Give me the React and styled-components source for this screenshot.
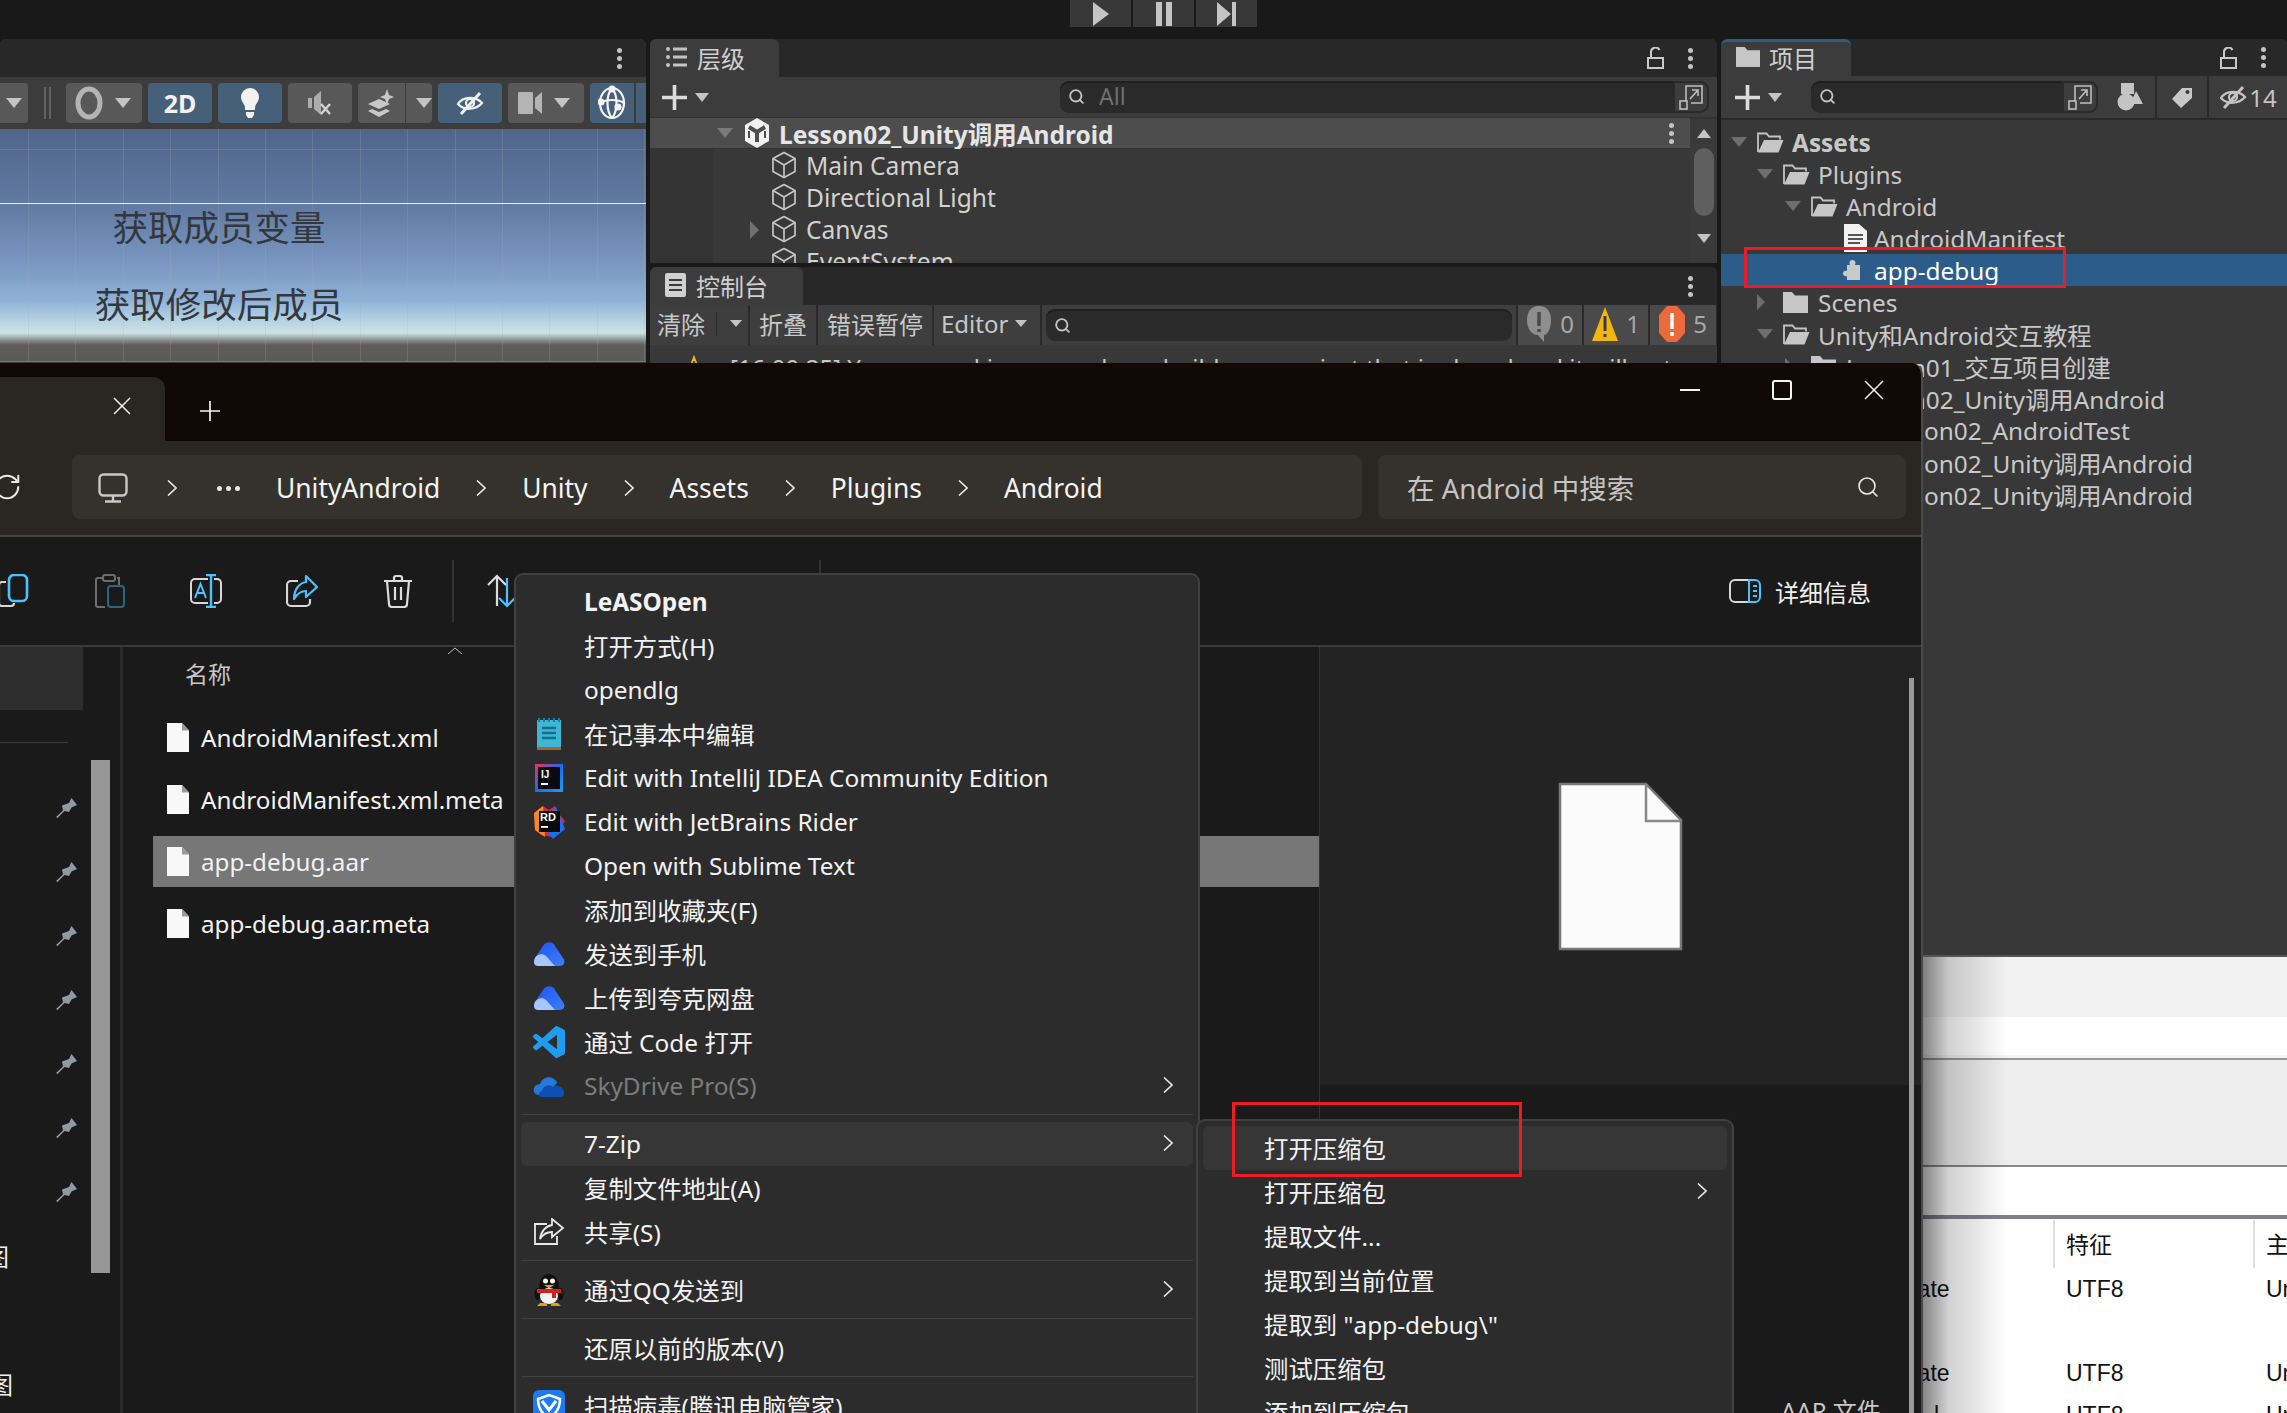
import React from 'react';
import styled, { createGlobalStyle } from 'styled-components';
import { Search, RotateCw } from 'lucide-react';

const FONT = `"Noto Sans", "Noto Sans CJK SC", sans-serif`;

const GlobalStyle = createGlobalStyle`
  html, body { margin: 0; padding: 0; background: #191919; }
  * { box-sizing: border-box; }
  svg { display: block; flex: none; }
`;

/* ---------- shared bits ---------- */

const Desktop = styled.div`
  position: relative;
  width: 2287px;
  height: 1413px;
  overflow: hidden;
  background: #191919;
  font-family: ${FONT};
  white-space: nowrap;
`;

const Arrow = styled.span`
  display: inline-block;
  flex: none;
  width: 0;
  height: 0;
  ${p => p.$dir === 'right' && `
    border-top: ${p.$size || 9}px solid transparent;
    border-bottom: ${p.$size || 9}px solid transparent;
    border-left: ${(p.$size || 9) * 1.1}px solid ${p.$color || '#707070'};
  `}
  ${p => p.$dir === 'up' && `
    border-left: ${p.$size || 7}px solid transparent;
    border-right: ${p.$size || 7}px solid transparent;
    border-bottom: ${(p.$size || 7) * 1.3}px solid ${p.$color || '#c4c4c4'};
  `}
  ${p => (!p.$dir || p.$dir === 'down') && `
    border-left: ${p.$size || 7}px solid transparent;
    border-right: ${p.$size || 7}px solid transparent;
    border-top: ${(p.$size || 7) * 1.3}px solid ${p.$color || '#c4c4c4'};
  `}
`;

const Dots = styled.span`
  display: flex;
  flex-direction: column;
  gap: 3px;
  i { width: 5px; height: 5px; border-radius: 50%; background: ${p => p.$color || '#c4c4c4'}; }
`;
const Kebab = ({ color }) => <Dots $color={color}><i /><i /><i /></Dots>;

const Chevron = ({ color = '#e8e8e8' }) => (
  <svg width="10" height="16" viewBox="0 0 10 16" fill="none" stroke={color} strokeWidth="1.600"><path d="M1 0.500 9 8 1 15.500" /></svg>
);

const PlusMark = () => (
  <svg width="25" height="25" viewBox="0 0 25 25" stroke="#dcdcdc" strokeWidth="3.600"><path d="M12.500 0V25M0 12.500H25" /></svg>
);

const Cube = () => (
  <svg width="26" height="28" viewBox="0 0 26 28" fill="none" stroke="#c6c6c6" strokeWidth="1.700" strokeLinejoin="round">
    <path d="M13 1.500 24 7.500V20.500L13 26.500 2 20.500V7.500Z" />
    <path d="M2 7.500 13 14 24 7.500M13 14V26.500" />
  </svg>
);

const UnityLogo = () => (
  <svg width="26" height="30" viewBox="0 0 26 30">
    <path d="M13 0 25 7V23L13 30 1 23V7Z" fill="#f2f2f2" />
    <path d="M13 14 5 9M13 14 21 9M13 14V24" stroke="#4d4d4d" strokeWidth="4" />
    <path d="M5 13V20M21 13V20" stroke="#4d4d4d" strokeWidth="2" />
  </svg>
);

const FolderOpen = () => (
  <svg width="27" height="21" viewBox="0 0 27 21">
    <path d="M1 20V1.500H9.500L12 4.500H23V7.500" fill="none" stroke="#c4c4c4" strokeWidth="1.800" />
    <path d="M7 8H26.500L21.500 20.500H1Z" fill="#c6c6c6" />
  </svg>
);

const FolderClosed = ({ color = '#c6c6c6', w = 25, h = 21 }) => (
  <svg width={w} height={h} viewBox="0 0 25 21"><path d="M0 0H9L12 3.500H25V21H0Z" fill={color} /></svg>
);

const NoteFile = () => (
  <svg width="24" height="28" viewBox="0 0 24 28">
    <path d="M1 0H16L24 7V28H1Z" fill="#f2f2f2" />
    <path d="M5 11H20M5 15H20M5 19H17" stroke="#555" strokeWidth="1.800" />
  </svg>
);

const PuzzleFile = () => (
  <svg width="17" height="20" viewBox="0 0 17 20">
    <path d="M4 5H7C6 3 6.500 0 9.500 0S13 3 12 5H17V20H4V16C2 17 0 15.500 0 13.500S2 10 4 11Z" fill="#c9c9c9" />
  </svg>
);

const LockOpen = () => (
  <svg width="17" height="22" viewBox="0 0 17 22" fill="none" stroke="#c8c8c8" strokeWidth="2">
    <rect x="1" y="11" width="15" height="10" />
    <path d="M4 11V5A4.500 4.500 0 0 1 12.500 3" />
  </svg>
);

const ExpandBox = () => (
  <svg width="24" height="26" viewBox="0 0 24 26" fill="none" stroke="#bdbdbd" strokeWidth="1.600">
    <path d="M7 17V2H23V19H12" />
    <rect x="1" y="17" width="7" height="8" />
    <path d="M11 15 19 6M13 6H19V12" />
  </svg>
);

const SmallSearch = ({ color = '#c4c4c4' }) => <Search size={17} color={color} strokeWidth={2.6} />;

const EyeSlash = ({ color = '#f0f0f0', w = 28, h = 24 }) => (
  <svg width={w} height={h} viewBox="0 0 28 24" fill="none" stroke={color} strokeWidth="2.200">
    <path d="M2 13C7 5 20 5 26 12 20 19 8 20 2 13Z" />
    <circle cx="14" cy="12" r="4" />
    <path d="M5 23 24 2" strokeWidth="3" />
  </svg>
);

/* ---------- unity: top bar ---------- */

const Editor = styled.div`
  display: flex;
  flex-direction: column;
  height: 955px;
`;
const PlayBar = styled.div`
  display: flex;
  gap: 2px;
  flex: none;
  height: 39px;
  padding-left: 1070px;
  align-items: flex-start;
`;
const PlayButton = styled.div`
  display: flex;
  align-items: center;
  justify-content: center;
  width: 61px;
  height: 27px;
  background: #383838;
`;
const Workspace = styled.div`
  flex: 1;
  display: flex;
  gap: 4px;
  min-height: 0;
`;
const Panel = styled.section`
  display: flex;
  flex-direction: column;
  min-height: 0;
  overflow: hidden;
  border-radius: 6px 6px 0 0;
  background: #383838;
  ${p => p.$width && `width: ${p.$width}px; flex: none;`}
  ${p => p.$height && `height: ${p.$height}px; flex: none;`}
  ${p => p.$grow && `flex: 1;`}
`;
const MiddleColumn = styled.div`
  display: flex;
  flex-direction: column;
  gap: 4px;
  width: 1067px;
  flex: none;
`;
const TabStrip = styled.div`
  display: flex;
  align-items: stretch;
  flex: none;
  height: ${p => p.$height || 38}px;
  background: #282828;
`;
const Tab = styled.div`
  display: flex;
  align-items: center;
  gap: ${p => p.$gap || 10}px;
  width: ${p => p.$width}px;
  padding: 0 0 2px 15px;
  background: #3c3c3c;
  color: #cfcfcf;
  font-size: 24px;
  border-radius: 6px 6px 0 0;
  ${p => p.$focus && `border-top: 3px solid #2c5d87; padding-bottom: 4px;`}
`;
const StripTools = styled.div`
  display: flex;
  align-items: center;
  gap: 24px;
  margin-left: auto;
  padding-right: ${p => p.$right || 24}px;
`;

const ListGlyph = () => (
  <svg width="22" height="22" viewBox="0 0 22 22" fill="#c4c4c4">
    <circle cx="3" cy="3" r="2" /><rect x="8" y="1.500" width="14" height="3" />
    <circle cx="3" cy="11" r="2" /><rect x="8" y="9.500" width="14" height="3" />
    <circle cx="3" cy="19" r="2" /><rect x="8" y="17.500" width="14" height="3" />
  </svg>
);
const ConsoleGlyph = () => (
  <svg width="21" height="24" viewBox="0 0 21 24">
    <rect width="21" height="24" rx="2" fill="#d0d0d0" />
    <path d="M4 7H17M4 12H17M4 17H17" stroke="#3c3c3c" strokeWidth="2.200" />
  </svg>
);

/* ---------- unity: scene ---------- */

const SceneToolbar = styled.div`
  display: flex;
  align-items: center;
  gap: 6px;
  flex: none;
  height: 52px;
  background: #3c3c3c;
  overflow: hidden;
`;
const ToolButton = styled.div`
  position: relative;
  display: flex;
  align-items: center;
  justify-content: ${p => p.$justify || 'center'};
  gap: ${p => p.$gap ?? 14}px;
  flex: none;
  width: ${p => p.$width || 64}px;
  height: 40px;
  padding: ${p => p.$pad || '0'};
  border-radius: ${p => p.$radius || '4px'};
  background: ${p => (p.$on ? '#46607a' : '#585858')};
  color: #f2f2f2;
  font-size: 25px;
  font-weight: 700;
`;
const Splitter = styled.i`
  align-self: stretch;
  width: 2px;
  background: #3c3c3c;
`;
const ToolbarGrip = styled.div`
  flex: none;
  width: 26px;
  height: 40px;
  display: flex;
  justify-content: center;
  gap: 3px;
  i { width: 2px; background: #626262; margin: 4px 0; }
`;
const SceneView = styled.div`
  flex: none;
  height: 233px;
  padding-top: 73px;
  display: flex;
  flex-direction: column;
  gap: 27px;
  border-bottom: 1px solid #777;
  background:
    linear-gradient(#e8eef5, #e8eef5) 0 74px / 100% 1px no-repeat,
    repeating-linear-gradient(90deg, transparent 0 28px, rgba(170, 170, 170, .22) 28px 29px, transparent 29px 47.400px),
    linear-gradient(transparent 20px, rgba(170,170,170,.22) 20px 21px, transparent 21px 162px, rgba(170,170,170,.25) 162px 163px, transparent 163px),
    linear-gradient(#51648a 0, #627ba3 78px, #7b99c3 138px, #8fb1d7 171px, #b5d2e2 191px, #cde3e4 204px, #8a9290 211px, #5f5c5a 216px, #5c5a58 233px);
`;
const SceneLabel = styled.div`
  width: 438px;
  height: 50px;
  line-height: 50px;
  text-align: center;
  font-size: 35.500px;
  color: #33373e;
`;

/* ---------- unity: hierarchy ---------- */

const PanelToolbar = styled.div`
  display: flex;
  align-items: center;
  flex: none;
  height: ${p => p.$height || 40}px;
  background: #3c3c3c;
`;
const AddButton = styled.div`
  display: flex;
  align-items: center;
  gap: 8px;
  flex: none;
  width: ${p => p.$width}px;
  padding-left: ${p => p.$left}px;
`;
const SearchField = styled.div`
  display: flex;
  align-items: center;
  gap: 14px;
  height: 32px;
  width: ${p => p.$width}px;
  padding: 0 0 2px 8px;
  border-radius: 9px;
  background: #2a2a2a;
  box-shadow: inset 0 2px 0 #1f1f1f;
  color: #6f6f6f;
  font-size: 23px;
`;
const SearchEnd = styled.div`
  margin: 0 0 -2px auto;
  align-self: stretch;
  display: flex;
  align-items: center;
  justify-content: center;
  width: 36px;
  border-radius: 0 9px 9px 0;
  background: #3d3d3d;
  border: 2px solid #2a2a2a;
`;
const TreeWrap = styled.div`
  flex: 1;
  display: flex;
  min-height: 0;
  overflow: hidden;
  background: #333;
`;
const TreeMain = styled.div`
  flex: 1;
  display: flex;
  flex-direction: column;
  min-width: 0;
`;
const SceneRow = styled.div`
  display: flex;
  align-items: center;
  flex: none;
  height: 30px;
  margin: 1px 0;
  padding: 0 16px 0 67px;
  background: #4d4d4d;
  color: #e6e6e6;
  font-size: 24.500px;
  font-weight: 700;
  gap: 11px;
  span:last-child { margin-left: auto; }
`;
const ChildRows = styled.div`
  flex: 1;
  margin-left: 63px;
  background: #383838;
`;
const GameRow = styled.div`
  display: flex;
  align-items: center;
  height: 32px;
  padding-left: 37px;
  color: #d2d2d2;
  font-size: 24.600px;
  > span:first-child { width: 21px; flex: none; }
  > svg { margin-right: 9px; }
`;
const ScrollColumn = styled.div`
  width: 27px;
  flex: none;
  display: flex;
  flex-direction: column;
  align-items: center;
  background: #3a3a3a;
  margin-top: 2px;
`;
const ScrollThumb = styled.div`
  width: 20px;
  height: 68px;
  margin: 10px 0 18px;
  border-radius: 10px;
  background: #5f5f5f;
`;

/* ---------- unity: console ---------- */

const ConsoleBar = styled.div`
  display: flex;
  align-items: stretch;
  flex: none;
  gap: 2px;
  height: 40px;
  background: #2a2a2a;
`;
const ConsoleButton = styled.div`
  display: flex;
  align-items: center;
  justify-content: ${p => p.$justify || 'center'};
  gap: ${p => p.$gap || 8}px;
  width: ${p => p.$width}px;
  flex: none;
  padding: 0 0 3px ${p => p.$left || 0}px;
  background: ${p => p.$light ? '#4a4a4a' : '#3e3e3e'};
  color: ${p => p.$light ? '#a8a8a8' : '#c8c8c8'};
  font-size: 24px;
`;
const ConsoleSearch = styled.div`
  display: flex;
  align-items: center;
  flex: none;
  width: 474px;
  padding: 0 4px;
  background: #3e3e3e;
`;
const ConsoleField = styled.div`
  display: flex;
  align-items: center;
  width: 100%;
  height: 32px;
  padding-left: 8px;
  border-radius: 9px;
  background: #2a2a2a;
  box-shadow: inset 0 2px 0 #1f1f1f;
`;
const LogRow = styled.div`
  display: flex;
  align-items: center;
  gap: 26px;
  height: 34px;
  margin-top: 5px;
  padding-left: 34px;
  color: #c8c8c8;
  font-size: 24px;
`;

const WarnBubble = () => (
  <svg width="26" height="38" viewBox="0 0 26 38">
    <path d="M13 1C21 1 25 7 25 15S22 30 18 30V37L12 30C5 30 1 23 1 15S5 1 13 1Z" fill="#8e8e8e" />
    <path d="M13 7V21M13 24V27" stroke="#4a4a4a" strokeWidth="3.500" />
  </svg>
);
const WarnTriangle = ({ w = 26, h = 36 }) => (
  <svg width={w} height={h} viewBox="0 0 26 36">
    <path d="M13 1 26 35H0Z" fill="#f2b70f" />
    <path d="M13 10V25M13 28V31" stroke="#3a3a3a" strokeWidth="3" />
  </svg>
);
const ErrorHex = () => (
  <svg width="26" height="36" viewBox="0 0 26 36">
    <path d="M8 0H18L26 9V27L18 36H8L0 27V9Z" fill="#ea6a3c" />
    <path d="M13 7V23M13 26V30" stroke="#fff" strokeWidth="3.500" />
  </svg>
);

/* ---------- unity: project ---------- */

const ProjectTools = styled.div`
  display: flex;
  align-self: stretch;
  margin-left: 7px;
  gap: 2px;
  background: #2a2a2a;
`;
const ProjectTool = styled.div`
  display: flex;
  align-items: center;
  justify-content: center;
  gap: 2px;
  width: ${p => p.$width}px;
  background: #3c3c3c;
  color: #c4c4c4;
  font-size: 24px;
`;
const ProjectTree = styled.div`
  flex: 1;
  padding-top: 6px;
  background: #383838;
  border-top: 2px solid #2a2a2a;
`;
const AssetRow = styled.div`
  display: flex;
  align-items: center;
  height: 32px;
  padding-left: ${p => (p.$depth === 0 ? 10 : 8 + p.$depth * 28)}px;
  color: ${p => (p.$selected ? '#fff' : '#c8c8c8')};
  background: ${p => (p.$selected ? '#2c5d8a' : 'transparent')};
  font-size: 24.400px;
  font-weight: ${p => (p.$bold ? 700 : 400)};
`;
const ArrowSlot = styled.span`
  display: flex;
  flex: none;
  width: 26px;
`;
const IconSlot = styled.span`
  display: flex;
  flex: none;
  width: 35px;
  padding-left: ${p => p.$left || 0}px;
`;

const ASSETS = [
  { name: 'Assets', depth: 0, open: true, bold: true },
  { name: 'Plugins', depth: 1, open: true },
  { name: 'Android', depth: 2, open: true },
  { name: 'AndroidManifest', depth: 3, file: 'note' },
  { name: 'app-debug', depth: 3, file: 'puzzle', selected: true },
  { name: 'Scenes', depth: 1 },
  { name: 'Unity和Android交互教程', depth: 1, open: true },
  { name: 'Lesson01_交互项目创建', depth: 2 },
  { name: 'Lesson02_Unity调用Android', depth: 2, open: true },
  { name: 'Lesson02_AndroidTest', depth: 3 },
  { name: 'Lesson02_Unity调用Android', depth: 3 },
  { name: 'Lesson02_Unity调用Android', depth: 3 },
];

/* ---------- file explorer window ---------- */

const Explorer = styled.div`
  position: absolute;
  left: 0;
  top: 363px;
  width: 1923px;
  height: 1050px;
  display: flex;
  flex-direction: column;
  overflow: hidden;
  border-right: 2px solid #4a4a4a;
  border-top-right-radius: 12px;
  background: #1a1a1a;
`;
const TitleBar = styled.div`
  display: flex;
  flex: none;
  height: 78px;
  background: #100905;
`;
const WindowTab = styled.div`
  display: flex;
  align-items: center;
  justify-content: flex-end;
  width: 165px;
  margin-top: 14px;
  padding: 0 34px 6px 0;
  border-radius: 0 12px 0 0;
  background: #2a2723;
`;
const NewTab = styled.div`
  display: flex;
  align-items: center;
  margin-left: 35px;
  padding-top: 18px;
`;
const WindowButtons = styled.div`
  display: flex;
  align-items: center;
  gap: 72px;
  height: 54px;
  margin-left: auto;
  padding-right: 37px;
`;
const NavBar = styled.div`
  display: flex;
  align-items: center;
  gap: 16px;
  flex: none;
  height: 96px;
  padding: 0 15px 2px 0;
  background: #2a2722;
  border-bottom: 2px solid #444;
`;
const Refresh = styled.div`
  flex: none;
  width: 56px;
  margin-left: -8px;
  margin-right: 8px;
`;
const AddressBar = styled.div`
  display: flex;
  align-items: center;
  gap: 36px;
  flex: none;
  width: 1290px;
  height: 64px;
  padding: 2px 0 0 26px;
  border-radius: 8px;
  background: #35322d;
  color: #f4f4f4;
  font-size: 26.400px;
`;
const EllipsisDots = styled.span`
  display: flex;
  gap: 4px;
  margin-left: 4px;
  i { width: 5px; height: 5px; border-radius: 50%; background: #e8e8e8; }
`;
const SearchBox = styled.div`
  display: flex;
  align-items: center;
  justify-content: space-between;
  flex: 1;
  height: 64px;
  padding: 0 26px 0 29px;
  border-radius: 8px;
  background: #35322d;
  color: #c4c4c4;
  font-size: 27.500px;
`;
const CommandBar = styled.div`
  display: flex;
  align-items: center;
  flex: none;
  height: 110px;
  margin-left: -34px;
  border-bottom: 2px solid #3a3a3a;
`;
const CommandItem = styled.div`
  display: flex;
  align-items: center;
  justify-content: center;
  flex: none;
  width: 96px;
`;
const CommandSep = styled.i`
  flex: none;
  width: 2px;
  height: 62px;
  margin-left: ${p => p.$left || 0}px;
  background: #333;
`;
const DetailsButton = styled.div`
  display: flex;
  align-items: center;
  gap: 14px;
  margin-left: auto;
  padding-right: 50px;
  color: #f0f0f0;
  font-size: 24px;
`;
const Body = styled.div`
  flex: 1;
  display: flex;
  min-height: 0;
`;
const Sidebar = styled.div`
  display: flex;
  flex: none;
  width: 120px;
`;
const SideNav = styled.div`
  flex: none;
  width: 91px;
`;
const SideSelected = styled.div`
  width: 83px;
  height: 63px;
  background: #2d2d2d;
`;
const SideRule = styled.div`
  width: 68px;
  height: 1px;
  margin: 32px 0 32px;
  background: #3c3c3c;
`;
const SideRow = styled.div`
  display: flex;
  align-items: center;
  justify-content: flex-end;
  width: 77px;
  height: 64px;
  color: #f0f0f0;
  font-size: 24px;
`;
const ClippedLabel = styled.span`
  margin-right: auto;
  margin-left: -${p => p.$shift}px;
`;
const SideScroll = styled.div`
  flex: none;
  width: 19px;
  height: 513px;
  margin-top: 113px;
  background: #969696;
`;
const PaneRule = styled.div`
  flex: none;
  width: 3px;
  background: #2a2a2a;
`;
const FileList = styled.div`
  flex: none;
  width: 1196px;
  padding-left: 30px;
`;
const ListHeader = styled.div`
  position: relative;
  height: 65px;
  padding: 12px 0 0 32px;
  color: #c8c8c8;
  font-size: 23px;
  line-height: 30px;
`;
const SortCaret = styled.svg`
  position: absolute;
  left: 295px;
  top: 0;
`;
const FileRow = styled.div`
  display: flex;
  align-items: center;
  gap: 12px;
  height: 51px;
  margin-bottom: 11px;
  padding-left: 14px;
  background: ${p => (p.$selected ? '#777' : 'transparent')};
  color: #f2f2f2;
  font-size: 24.200px;
`;
const Preview = styled.div`
  position: relative;
  flex: 1;
  display: flex;
  flex-direction: column;
  border-left: 1px solid #333;
`;
const PreviewTop = styled.div`
  display: flex;
  align-items: center;
  justify-content: center;
  flex: none;
  height: 438px;
  background: #232323;
`;
const PreviewBottom = styled.div`
  flex: 1;
  padding: 307px 0 0 461px;
  color: #c8c8c8;
  font-size: 24px;
`;
const PreviewScroll = styled.div`
  position: absolute;
  right: 7px;
  top: 31px;
  bottom: 0;
  width: 5px;
  background: #999;
`;

const MonitorIcon = () => (
  <svg width="33" height="30" viewBox="0 0 33 30" fill="none" stroke="#c8c8c8" strokeWidth="2.400">
    <rect x="1.500" y="1.500" width="27" height="21" rx="4" />
    <path d="M15 23V28M7 28.500H23" />
  </svg>
);
const CopyIcon = () => (
  <svg width="32" height="34" viewBox="0 0 32 34" fill="none" strokeWidth="2.200" strokeLinejoin="round">
    <path d="M8 8H4A3 3 0 0 0 1 11V29A3 3 0 0 0 4 32H13A3 3 0 0 0 16 29" stroke="#d8d8d8" />
    <rect x="11" y="1" width="18" height="26" rx="5" stroke="#4cc2ff" strokeWidth="2.600" />
  </svg>
);
const PasteIcon = () => (
  <svg width="30" height="34" viewBox="0 0 30 34" fill="none" strokeWidth="2">
    <path d="M8 4H3A2 2 0 0 0 1 6V31A2 2 0 0 0 3 33H10M22 4H24V11" stroke="#6d6d6d" />
    <rect x="8" y="1" width="12" height="6" rx="2" stroke="#6d6d6d" />
    <rect x="13" y="12" width="16" height="21" rx="3" stroke="#2b6585" />
  </svg>
);
const RenameIcon = () => (
  <svg width="34" height="34" viewBox="0 0 34 34" fill="none" strokeWidth="2">
    <path d="M19 5H6A4 4 0 0 0 2 9V25A4 4 0 0 0 6 29H19M25 5H28A4 4 0 0 1 32 9V25A4 4 0 0 1 28 29H25" stroke="#d8d8d8" />
    <path d="M22 1V33M17 1H27M17 33H27" stroke="#4cc2ff" strokeWidth="2.400" />
    <path d="M6 24 11.500 10 17 24M8 19H15" stroke="#4cc2ff" />
  </svg>
);
const ShareIcon = () => (
  <svg width="32" height="34" viewBox="0 0 32 34" fill="none" strokeWidth="2.200" strokeLinejoin="round">
    <path d="M12 7H5A4 4 0 0 0 1 11V28A4 4 0 0 0 5 32H20A4 4 0 0 0 24 28V25" stroke="#d8d8d8" />
    <path d="M20 2 31 13 20 23V17C15 17 11 20 8 25 8 16 13 9 20 8Z" stroke="#4cc2ff" />
  </svg>
);
const TrashIcon = () => (
  <svg width="30" height="34" viewBox="0 0 30 34" fill="none" stroke="#dcdcdc" strokeWidth="2.200">
    <path d="M1 7H29M11 7V4A2 2 0 0 1 13 2H17A2 2 0 0 1 19 4V7" />
    <path d="M4 7 6 30A3 3 0 0 0 9 33H21A3 3 0 0 0 24 30L26 7" />
    <path d="M12 13V26M18 13V26" />
  </svg>
);
const SortIcon = () => (
  <svg width="30" height="34" viewBox="0 0 30 34" fill="none" strokeWidth="2.200">
    <path d="M10 32V2M1 11 10 2 19 11" stroke="#dcdcdc" />
    <path d="M20 4V32M12 24 20 32 28 24" stroke="#4cc2ff" />
  </svg>
);
const DetailsIcon = () => (
  <svg width="32" height="24" viewBox="0 0 32 24" fill="none" strokeWidth="2">
    <path d="M20 1H6A5 5 0 0 0 1 6V18A5 5 0 0 0 6 23H20" stroke="#d8d8d8" />
    <path d="M20 1H26A5 5 0 0 1 31 6V18A5 5 0 0 1 26 23H20Z" stroke="#4cc2ff" />
    <path d="M24 7H28M24 12H28M24 17H28" stroke="#4cc2ff" />
  </svg>
);
const PinIcon = () => (
  <svg width="21" height="21" viewBox="0 0 21 21">
    <path d="M0 20 7 13.500 6 8.500 13 6 15.500 1 21 8 15.500 10.500 13 15 8.500 14 1.500 21Z" fill="#8f9aa3" />
  </svg>
);
const SmallPage = () => (
  <svg width="22" height="29" viewBox="0 0 22 29">
    <path d="M0 0H15L22 7.500V29H0Z" fill="#f8f8f8" />
    <path d="M15 0V7.500H22" fill="#9a9a9a" />
  </svg>
);
const BigPage = () => (
  <svg width="125" height="169" viewBox="0 0 125 169">
    <path d="M2 2H88L123 38V167H2Z" fill="#fbfbfb" stroke="#777" strokeWidth="2.500" />
    <path d="M88 2V39H123" fill="none" stroke="#888" strokeWidth="2.500" />
  </svg>
);

/* ---------- context menus ---------- */

const Menu = styled.div`
  position: absolute;
  left: ${p => p.$left}px;
  top: ${p => p.$top}px;
  width: ${p => p.$width}px;
  padding: ${p => p.$pad}px 5px;
  border: 2px solid #404040;
  border-radius: 9px;
  background: #2c2c2c;
`;
const MenuRow = styled.div`
  display: flex;
  align-items: center;
  height: 44px;
  padding: 0 20px 2px ${p => p.$indent || 63}px;
  position: relative;
  border-radius: 6px;
  background: ${p => (p.$active ? '#363636' : 'transparent')};
  color: ${p => (p.$disabled ? '#7c7c7c' : '#f2f2f2')};
  font-size: 24.400px;
  font-weight: ${p => (p.$bold ? 700 : 400)};
`;
const MenuIcon = styled.span`
  position: absolute;
  left: 12px;
  top: 6px;
  width: 32px;
  height: 32px;
  display: flex;
  align-items: center;
  justify-content: center;
`;
const MenuChevron = styled.span`
  margin-left: auto;
`;
const MenuSep = styled.div`
  height: 14px;
  padding-top: 6px;
  &::after { content: ''; display: block; height: 1px; background: #414141; }
`;

const NotepadLogo = () => (
  <svg width="24" height="32" viewBox="0 0 24 32">
    <rect y="2" width="24" height="28" fill="#3eb6d6" />
    <rect y="29" width="24" height="3" fill="#a9622a" />
    <path d="M2 0V4M7 0V4M12 0V4M17 0V4M22 0V4" stroke="#1a7f99" strokeWidth="2" />
    <path d="M5 10H19M5 15H19M5 20H19" stroke="#146f88" strokeWidth="2.500" />
  </svg>
);
const IdeaLogo = () => (
  <svg width="28" height="28" viewBox="0 0 28 28">
    <defs>
      <linearGradient id="ij" x1="0" y1="0" x2="1" y2="1">
        <stop offset="0" stopColor="#fe2857" /><stop offset=".5" stopColor="#1b6cf4" /><stop offset="1" stopColor="#1b9cf4" />
      </linearGradient>
    </defs>
    <rect width="28" height="28" fill="url(#ij)" />
    <rect x="3" y="3" width="22" height="22" fill="#0a0a12" />
    <text x="6" y="14" fontSize="10" fontWeight="700" fill="#fff" fontFamily="Liberation Sans, sans-serif">IJ</text>
    <rect x="6" y="19" width="7" height="2" fill="#fff" />
  </svg>
);
const RiderLogo = () => (
  <svg width="32" height="34" viewBox="0 0 32 34">
    <path d="M1 8 10 1 16 5 22 1 26 9 32 16 27 24 20 32 8 30 2 25Z" fill="#d7264c" />
    <path d="M1 8 10 1 12 32 2 25Z" fill="#f58b1f" />
    <path d="M22 1 26 9 32 24 20 34 14 26Z" fill="#1d6ff0" />
    <rect x="6" y="6" width="21" height="21" fill="#0a0a0a" />
    <text x="7" y="16" fontSize="11" fontWeight="700" fill="#fff" fontFamily="Liberation Sans, sans-serif">RD</text>
    <rect x="8" y="21" width="7" height="1.800" fill="#fff" />
  </svg>
);
const QuarkCloud = () => (
  <svg width="32" height="24" viewBox="0 0 32 24">
    <defs>
      <linearGradient id="qk" x1="0" y1="0" x2="1" y2="1">
        <stop offset="0" stopColor="#1f55ee" /><stop offset="1" stopColor="#3d7dfc" />
      </linearGradient>
    </defs>
    <path d="M5 24C1 24 0 20 2 16L10 4C13 -1 20 -1 22 4L30 16C33 20 31 24 27 24Z" fill="url(#qk)" />
    <path d="M5 24C1 24 0 20 2 16 4 12 10 11 13 14L22 24Z" fill="#a9c6ff" />
  </svg>
);
const CodeLogo = () => (
  <svg width="32" height="32" viewBox="0 0 24 24">
    <path fill="#1f9cf0" d="M23.150 2.587 18.210.21a1.494 1.494 0 0 0-1.705.29l-9.460 8.630-4.120-3.128a.999.999 0 0 0-1.276.057L.327 7.261A1 1 0 0 0 .326 8.740L3.899 12 .326 15.260a1 1 0 0 0 .001 1.479L1.650 17.940a.999.999 0 0 0 1.276.057l4.120-3.128 9.460 8.630a1.492 1.492 0 0 0 1.704.29l4.942-2.377A1.500 1.500 0 0 0 24 20.060V3.939a1.500 1.500 0 0 0-.850-1.352zm-5.146 14.861L10.826 12l7.178-5.448v10.896z" />
  </svg>
);
const DriveCloud = () => (
  <svg width="32" height="22" viewBox="0 0 32 22">
    <path d="M6 20C2 20 0 17 1 13 2 10 5 9 7 9 9 3 16 0 21 4 23 5 24 7 24 8L12 20Z" fill="#2a78d5" />
    <path d="M9 22C5 22 5 17 9 16 10 11 16 9 20 12 24 9 31 12 31 17 32 20 30 22 27 22Z" fill="#0f4fb4" />
  </svg>
);
const ShareMenuIcon = () => (
  <svg width="32" height="28" viewBox="0 0 32 28" fill="none" stroke="#e8e8e8" strokeWidth="1.800">
    <path d="M14 6H2V26H24V18" />
    <path d="M19 1 30 10 19 19V14C14 14 10 16 7 21 8 13 13 8 19 7Z" />
  </svg>
);
const PenguinLogo = () => (
  <svg width="30" height="32" viewBox="0 0 30 32">
    <ellipse cx="15" cy="13" rx="10" ry="13" fill="#111" />
    <ellipse cx="3.500" cy="20" rx="3" ry="6" fill="#111" />
    <ellipse cx="26.500" cy="20" rx="3" ry="6" fill="#111" />
    <ellipse cx="15" cy="22" rx="9" ry="8" fill="#f4f4f4" />
    <circle cx="11.500" cy="7" r="2.500" fill="#f4f4f4" /><circle cx="18.500" cy="7" r="2.500" fill="#f4f4f4" />
    <path d="M10 11H20L15 14.500Z" fill="#e8a010" />
    <path d="M3 15H27V19H22V24H18V19H3Z" fill="#d81e1e" />
    <path d="M6 29H13V32H3ZM17 29H24L27 32H17Z" fill="#e8a010" />
  </svg>
);
const GuardLogo = () => (
  <svg width="32" height="32" viewBox="0 0 32 32">
    <rect width="32" height="32" rx="6" fill="#1c7bf2" />
    <path d="M5 9 16 5 27 9C27 18 23 24 16 28 9 24 5 18 5 9Z" fill="none" stroke="#fff" strokeWidth="2.500" />
    <path d="M9 11 16 20 23 11" fill="none" stroke="#fff" strokeWidth="3" />
  </svg>
);

const MAIN_MENU = [
  { text: 'LeASOpen', bold: true },
  { text: '打开方式(H)' },
  { text: 'opendlg' },
  { text: '在记事本中编辑', icon: <NotepadLogo /> },
  { text: 'Edit with IntelliJ IDEA Community Edition', icon: <IdeaLogo /> },
  { text: 'Edit with JetBrains Rider', icon: <RiderLogo /> },
  { text: 'Open with Sublime Text' },
  { text: '添加到收藏夹(F)' },
  { text: '发送到手机', icon: <QuarkCloud /> },
  { text: '上传到夸克网盘', icon: <QuarkCloud /> },
  { text: '通过 Code 打开', icon: <CodeLogo /> },
  { text: 'SkyDrive Pro(S)', icon: <DriveCloud />, more: true, disabled: true },
  { sep: true },
  { text: '7-Zip', more: true, active: true },
  { text: '复制文件地址(A)' },
  { text: '共享(S)', icon: <ShareMenuIcon /> },
  { sep: true },
  { text: '通过QQ发送到', icon: <PenguinLogo />, more: true },
  { sep: true },
  { text: '还原以前的版本(V)' },
  { sep: true },
  { text: '扫描病毒(腾讯电脑管家)', icon: <GuardLogo /> },
];

const SUB_MENU = [
  { text: '打开压缩包', active: true },
  { text: '打开压缩包', more: true },
  { text: '提取文件...' },
  { text: '提取到当前位置' },
  { text: '提取到 "app-debug\\"' },
  { text: '测试压缩包' },
  { text: '添加到压缩包' },
];

const MenuItems = ({ items, indent }) => items.map((item, i) =>
  item.sep ? <MenuSep key={i} /> : (
    <MenuRow key={i} $indent={indent} $active={item.active} $bold={item.bold} $disabled={item.disabled}>
      {item.icon && <MenuIcon>{item.icon}</MenuIcon>}
      {item.text}
      {item.more && <MenuChevron><Chevron /></MenuChevron>}
    </MenuRow>
  ));

const RedBox = styled.div`
  position: absolute;
  left: ${p => p.$left}px;
  top: ${p => p.$top}px;
  width: ${p => p.$width}px;
  height: ${p => p.$height}px;
  border: 3px solid #ed1c24;
`;

/* ---------- window behind explorer ---------- */

const BackWindow = styled.div`
  position: absolute;
  left: 1923px;
  right: 0;
  top: 955px;
  bottom: 0;
  display: flex;
  flex-direction: column;
  overflow: hidden;
  background: #fff;
  border-top: 2px solid #555;
  &::before {
    content: '';
    position: absolute;
    inset: 0 auto 0 0;
    width: 85px;
    background: linear-gradient(90deg, rgba(0,0,0,.48), rgba(0,0,0,.18) 30%, rgba(0,0,0,0));
  }
`;
const Band = styled.div`
  flex: none;
  height: ${p => p.$height}px;
  background: ${p => p.$color};
`;
const Columns = styled.div`
  display: grid;
  grid-template-columns: 132px 200px 1fr;
  grid-auto-rows: 42px;
  color: #111;
  font-family: "Liberation Sans", "Noto Sans CJK SC", sans-serif;
  font-size: 23px;
`;
const HeadCell = styled.div`
  display: flex;
  align-items: center;
  height: 48px;
  padding: 0 0 2px 11px;
  border-left: ${p => (p.$first ? '0' : '2px solid #e0e0e0')};
`;
const HeadRow = styled.div`
  display: grid;
  grid-template-columns: 130px 200px 1fr;
  flex: none;
  font-family: "Liberation Sans", "Noto Sans CJK SC", sans-serif;
  font-size: 23px;
  color: #111;
  margin-top: 1px;
`;
const Cell = styled.div`
  display: flex;
  align-items: center;
  padding-left: 11px;
  overflow: hidden;
`;
const CutCell = styled.div`
  display: flex;
  align-items: center;
  margin-left: -${p => p.$shift}px;
`;

export default function App() {
  return (
    <Desktop>
      <GlobalStyle />

      <Editor>
        <PlayBar>
          <PlayButton><svg width="16" height="24"><path d="M0 0 16 12 0 24Z" fill="#c4c4c4" /></svg></PlayButton>
          <PlayButton><svg width="18" height="24"><path d="M1 0H7V24H1ZM11 0H17V24H11Z" fill="#c4c4c4" /></svg></PlayButton>
          <PlayButton><svg width="20" height="24"><path d="M0 0 14 12 0 24ZM15 0H19V24H15Z" fill="#c4c4c4" /></svg></PlayButton>
        </PlayBar>

        <Workspace>
          <Panel $width={646}>
            <TabStrip>
              <StripTools><Kebab /></StripTools>
            </TabStrip>
            <SceneToolbar>
              <ToolButton $width={28} $radius="0 4px 4px 0"><Arrow $size={8} /></ToolButton>
              <ToolbarGrip><i /><i /></ToolbarGrip>
              <ToolButton $width={76} $justify="flex-start" $pad="0 0 0 9px" $gap={12}>
                <svg width="28" height="34" viewBox="0 0 28 34" fill="none"><ellipse cx="14" cy="17" rx="11" ry="14" stroke="#b4b4b4" strokeWidth="5" /></svg>
                <Arrow $size={8} />
              </ToolButton>
              <ToolButton $on>2D</ToolButton>
              <ToolButton $on>
                <svg width="18" height="30" viewBox="0 0 18 30"><path d="M9 0A9 9 0 0 1 18 9C18 14 14 16 14 20V22H4V20C4 16 0 14 0 9A9 9 0 0 1 9 0ZM5 24H13V27L11 30H7L5 27Z" fill="#f2f2f2" /></svg>
              </ToolButton>
              <ToolButton>
                <svg width="24" height="26" viewBox="0 0 24 26" fill="#adadad"><path d="M0 8H4V18H0ZM6 7 13 1V25L6 19Z" /><path d="M13 14 22 24M22 14 13 24" stroke="#d2d2d2" strokeWidth="2.500" /></svg>
              </ToolButton>
              <ToolButton $width={74} $justify="flex-start" $pad="0 0 0 9px" $gap={10}>
                <svg width="28" height="30" viewBox="0 0 28 30" fill="#c8c8c8"><path d="M1 16 12 11 23 16 12 21ZM1 23 5 21 12 24 19 21 23 23 12 29Z" /><path d="M20 1 22 7 27 9 22 11 20 17 18 11 13 9 18 7Z" /></svg>
                <Splitter />
                <Arrow $size={8} />
              </ToolButton>
              <ToolButton $on><EyeSlash /></ToolButton>
              <ToolButton $width={76} $justify="flex-start" $pad="0 0 0 10px" $gap={12}>
                <svg width="24" height="22" viewBox="0 0 24 22" fill="#b4b4b4"><rect width="15" height="22" rx="1" /><path d="M17 6 24 0V22L17 16Z" /></svg>
                <Arrow $size={8} />
              </ToolButton>
              <ToolButton $on $width={70} $justify="flex-start" $pad="0 0 0 8px" $radius="4px 0 0 4px" $gap={8}>
                <svg width="28" height="36" viewBox="0 0 28 36" fill="none" stroke="#f4f4f4" strokeWidth="2.200">
                  <ellipse cx="14" cy="18" rx="12" ry="15" />
                  <path d="M2 18C8 14 20 14 26 18M14 3C8 10 8 26 14 33M14 3C20 10 20 26 14 33" />
                  <circle cx="14" cy="4" r="2.500" fill="#f4f4f4" /><circle cx="3" cy="17" r="2.500" fill="#f4f4f4" /><circle cx="20" cy="22" r="2.500" fill="#f4f4f4" />
                </svg>
                <Splitter />
              </ToolButton>
            </SceneToolbar>
            <SceneView>
              <SceneLabel>获取成员变量</SceneLabel>
              <SceneLabel>获取修改后成员</SceneLabel>
            </SceneView>
          </Panel>

          <MiddleColumn>
            <Panel $height={224}>
              <TabStrip>
                <Tab $width={129}><ListGlyph />层级</Tab>
                <StripTools><LockOpen /><Kebab /></StripTools>
              </TabStrip>
              <PanelToolbar>
                <AddButton $width={410} $left={12}><PlusMark /><Arrow $size={7} /></AddButton>
                <SearchField $width={649}>
                  <SmallSearch />All
                  <SearchEnd><ExpandBox /></SearchEnd>
                </SearchField>
              </PanelToolbar>
              <TreeWrap>
                <TreeMain>
                  <SceneRow>
                    <Arrow $size={8} $color="#7a7a7a" />
                    <UnityLogo />
                    <span style={{ marginLeft: -2 }}>Lesson02_Unity调用Android</span>
                    <Kebab />
                  </SceneRow>
                  <ChildRows>
                    <GameRow><span /><Cube />Main Camera</GameRow>
                    <GameRow><span /><Cube />Directional Light</GameRow>
                    <GameRow><span><Arrow $dir="right" $size={9} /></span><Cube />Canvas</GameRow>
                    <GameRow><span /><Cube />EventSystem</GameRow>
                  </ChildRows>
                </TreeMain>
                <ScrollColumn>
                  <Arrow $dir="up" $size={7} style={{ marginTop: 10 }} />
                  <ScrollThumb />
                  <Arrow $size={7} />
                </ScrollColumn>
              </TreeWrap>
            </Panel>

            <Panel $grow>
              <TabStrip>
                <Tab $width={153}><ConsoleGlyph />控制台</Tab>
                <StripTools><Kebab /></StripTools>
              </TabStrip>
              <ConsoleBar>
                <ConsoleButton $width={98} $justify="flex-start" $left={7} $gap={11}>
                  清除<Splitter style={{ height: 24, alignSelf: 'center', width: 1, background: '#2a2a2a' }} /><Arrow $size={6} style={{ marginLeft: 2 }} />
                </ConsoleButton>
                <ConsoleButton $width={66}>折叠</ConsoleButton>
                <ConsoleButton $width={114}>错误暂停</ConsoleButton>
                <ConsoleButton $width={106} $justify="flex-start" $left={7} $gap={7}>Editor<Arrow $size={6} /></ConsoleButton>
                <ConsoleSearch><ConsoleField><SmallSearch /></ConsoleField></ConsoleSearch>
                <ConsoleButton $width={64} $light><WarnBubble />0</ConsoleButton>
                <ConsoleButton $width={64} $light><WarnTriangle />1</ConsoleButton>
                <ConsoleButton $width={66} $light><ErrorHex />5</ConsoleButton>
              </ConsoleBar>
              <LogRow><WarnTriangle w={20} h={26} />[16:00:25] You are making your player build on a project that is closed and it will not run as expected</LogRow>
            </Panel>
          </MiddleColumn>

          <Panel $grow>
            <TabStrip $height={37}>
              <Tab $width={130} $focus $gap={9}><FolderClosed w={24} h={22} />项目</Tab>
              <StripTools $right={21}><LockOpen /><Kebab /></StripTools>
            </TabStrip>
            <PanelToolbar $height={42}>
              <AddButton $width={90} $left={14}><PlusMark /><Arrow $size={7} /></AddButton>
              <SearchField $width={287}>
                <SmallSearch />
                <SearchEnd><ExpandBox /></SearchEnd>
              </SearchField>
              <ProjectTools>
                <ProjectTool $width={50}>
                  <svg width="26" height="28" viewBox="0 0 26 28" fill="#c4c4c4"><rect x="4" width="13" height="11" /><circle cx="9" cy="19" r="8.500" /><path d="M19 8 26 21H13Z" /></svg>
                </ProjectTool>
                <ProjectTool $width={50}>
                  <svg width="22" height="22" viewBox="0 0 22 22"><path d="M11 2 H21 V12 L10 22 1 13Z" fill="#c8c8c8" /><circle cx="16.500" cy="6" r="2" fill="#3c3c3c" /></svg>
                </ProjectTool>
                <ProjectTool $width={78}><EyeSlash color="#c4c4c4" w={28} h={24} />14</ProjectTool>
              </ProjectTools>
            </PanelToolbar>
            <ProjectTree>
              {ASSETS.map((a, i) => (
                <AssetRow key={i} $depth={a.depth} $selected={a.selected} $bold={a.bold}>
                  <ArrowSlot>
                    {!a.file && <Arrow $dir={a.open ? 'down' : 'right'} $size={8} $color="#6e6e6e" />}
                  </ArrowSlot>
                  <IconSlot $left={a.file ? 4 : 0}>
                    {a.file === 'note' && <NoteFile />}
                    {a.file === 'puzzle' && <PuzzleFile />}
                    {!a.file && (a.open ? <FolderOpen /> : <FolderClosed />)}
                  </IconSlot>
                  {a.name}
                </AssetRow>
              ))}
            </ProjectTree>
          </Panel>
        </Workspace>
      </Editor>

      <RedBox $left={1744} $top={247} $width={322} $height={41} />

      <BackWindow>
        <Band $height={60} $color="#f2f2f2" />
        <Band $height={38} $color="#fff" />
        <Band $height={3} $color="#f4f4f4" />
        <Band $height={2} $color="#999" />
        <Band $height={105} $color="#eee" />
        <Band $height={2} $color="#888" />
        <Band $height={48} $color="#fff" />
        <Band $height={4} $color="#80808a" />
        <HeadRow>
          <HeadCell $first />
          <HeadCell>特征</HeadCell>
          <HeadCell>主</HeadCell>
        </HeadRow>
        <Columns>
          <CutCell $shift={45}>Private</CutCell><Cell>UTF8</Cell><Cell>Unicode</Cell>
          <Cell /><Cell /><Cell />
          <CutCell $shift={45}>Private</CutCell><Cell>UTF8</Cell><Cell>Unicode</Cell>
          <Cell>l</Cell><Cell>UTF8</Cell><Cell>Unicode</Cell>
        </Columns>
      </BackWindow>

      <Explorer>
        <TitleBar>
          <WindowTab>
            <svg width="18" height="18" viewBox="0 0 18 18" stroke="#f4f4f4" strokeWidth="1.500"><path d="M1 1 17 17M17 1 1 17" /></svg>
          </WindowTab>
          <NewTab>
            <svg width="20" height="20" viewBox="0 0 20 20" stroke="#f4f4f4" strokeWidth="1.700"><path d="M10 0V20M0 10H20" /></svg>
          </NewTab>
          <WindowButtons>
            <svg width="20" height="20" viewBox="0 0 20 20" stroke="#f4f4f4" strokeWidth="2"><path d="M0 10H20" /></svg>
            <svg width="20" height="20" viewBox="0 0 20 20" fill="none" stroke="#f4f4f4" strokeWidth="2"><rect x="1" y="1" width="18" height="18" rx="2" /></svg>
            <svg width="20" height="20" viewBox="0 0 20 20" stroke="#f4f4f4" strokeWidth="1.500"><path d="M1 1 19 19M19 1 1 19" /></svg>
          </WindowButtons>
        </TitleBar>

        <NavBar>
          <Refresh><RotateCw size={30} color="#e8e8e8" strokeWidth={1.6} /></Refresh>
          <AddressBar>
            <MonitorIcon />
            <Chevron />
            <EllipsisDots><i /><i /><i /></EllipsisDots>
            <span>UnityAndroid</span>
            <Chevron />
            <span>Unity</span>
            <Chevron />
            <span>Assets</span>
            <Chevron />
            <span>Plugins</span>
            <Chevron />
            <span>Android</span>
          </AddressBar>
          <SearchBox>
            在 Android 中搜索
            <Search size={24} color="#e8e8e8" strokeWidth={1.6} />
          </SearchBox>
        </NavBar>

        <CommandBar>
          <CommandItem><CopyIcon /></CommandItem>
          <CommandItem><PasteIcon /></CommandItem>
          <CommandItem><RenameIcon /></CommandItem>
          <CommandItem><ShareIcon /></CommandItem>
          <CommandItem><TrashIcon /></CommandItem>
          <CommandSep $left={6} />
          <CommandItem><SortIcon /></CommandItem>
          <CommandSep $left={269} />
          <DetailsButton><DetailsIcon />详细信息</DetailsButton>
        </CommandBar>

        <Body>
          <Sidebar>
            <SideNav>
              <SideSelected />
              <SideRule />
              {[0, 1, 2, 3, 4, 5, 6].map(i => <SideRow key={i}><PinIcon /></SideRow>)}
              <SideRow><ClippedLabel $shift={15}>图</ClippedLabel></SideRow>
              <SideRow />
              <SideRow><ClippedLabel $shift={11}>图</ClippedLabel></SideRow>
            </SideNav>
            <SideScroll />
          </Sidebar>
          <PaneRule />
          <FileList>
            <ListHeader>
              名称
              <SortCaret width="14" height="7" viewBox="0 0 14 7" fill="none" stroke="#bbb" strokeWidth="1"><path d="M0 7 7 1 14 7" /></SortCaret>
            </ListHeader>
            <FileRow><SmallPage />AndroidManifest.xml</FileRow>
            <FileRow><SmallPage />AndroidManifest.xml.meta</FileRow>
            <FileRow $selected><SmallPage />app-debug.aar</FileRow>
            <FileRow><SmallPage />app-debug.aar.meta</FileRow>
          </FileList>
          <Preview>
            <PreviewTop><BigPage /></PreviewTop>
            <PreviewBottom>AAR 文件</PreviewBottom>
            <PreviewScroll />
          </Preview>
        </Body>
      </Explorer>

      <Menu $left={514} $top={573} $width={686} $pad={5}>
        <MenuItems items={MAIN_MENU} />
      </Menu>

      <Menu $left={1196} $top={1119} $width={538} $pad={5}>
        <MenuItems items={SUB_MENU} indent={61} />
      </Menu>

      <RedBox $left={1232} $top={1102} $width={290} $height={75} />
    </Desktop>
  );
}
